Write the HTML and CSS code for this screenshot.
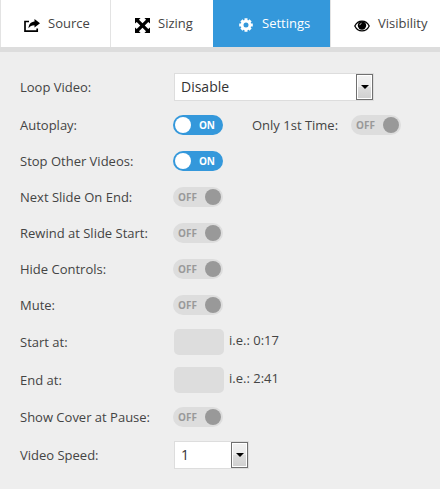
FILE: index.html
```html
<!DOCTYPE html>
<html lang="en">
<head>
<meta charset="utf-8">
<title>Video Settings</title>
<link rel="stylesheet" href="styles.css">
</head>
<body>
<nav class="tabs">
  <a class="tab source"><svg class="icon" viewBox="0 0 16 14"><path d="M5 2.500H1v9.700h12.200V9.500" fill="none" stroke="currentColor" stroke-width="1.700"/><path d="M10.500 0L16 4.300l-5.500 4.200V6.200C7.700 6.200 6 7 4.500 9.300 4.700 5.500 6.800 2.800 10.500 2.500z"/></svg><span>Source</span></a>
  <a class="tab sizing"><svg class="icon" viewBox="0 0 14 14"><path d="M0 0h5.200L3.700 1.600 7 4.900l3.300-3.300L8.800 0H14v5.200l-1.600-1.500L9.100 7l3.300 3.300L14 8.800V14H8.800l1.500-1.600L7 9.100l-3.300 3.300L5.200 14H0V8.800l1.600 1.500L4.900 7 1.600 3.700 0 5.200z"/></svg><span>Sizing</span></a>
  <a class="tab settings"><svg class="icon" viewBox="-7 -7 14 14"><circle r="3.900" fill="none" stroke="currentColor" stroke-width="2.800"/><path d="M-1.500-4.500v-2.300h3v2.300M-1.500 4.500v2.300h3V4.500M-4.500-1.500h-2.300v3h2.300M4.500-1.500h2.300v3H4.500"/><path transform="rotate(45)" d="M-1.500-4.500v-2h3v2M-1.500 4.500v2h3v-2M-4.500-1.500h-2v3h2M4.500-1.500h2v3h-2"/></svg><span>Settings</span></a>
  <a class="tab visibility"><svg class="icon" viewBox="0 0 16 12"><path d="M.8 6C4-.5 12-.5 15.200 6 12 12.500 4 12.500.8 6z" fill="#fff" stroke="currentColor" stroke-width="1.300"/><circle cx="8" cy="5.500" r="4.200"/><path d="M5.800 5.200Q6 3.500 7.600 3.200" stroke="#bbb" stroke-width="1" fill="none"/></svg><span>Visibility</span></a>
</nav>
<main class="panel">
  <div class="row tall"><span class="label">Loop Video:</span><div class="select wide"><span>Disable</span><i class="arrow"></i></div></div>
  <div class="row"><span class="label">Autoplay:</span><div class="toggle on"><b>ON</b></div><span class="second">Only 1st Time:</span><div class="toggle"><b>OFF</b></div></div>
  <div class="row"><span class="label">Stop Other Videos:</span><div class="toggle on"><b>ON</b></div></div>
  <div class="row"><span class="label">Next Slide On End:</span><div class="toggle"><b>OFF</b></div></div>
  <div class="row"><span class="label">Rewind at Slide Start:</span><div class="toggle"><b>OFF</b></div></div>
  <div class="row"><span class="label">Hide Controls:</span><div class="toggle"><b>OFF</b></div></div>
  <div class="row"><span class="label">Mute:</span><div class="toggle"><b>OFF</b></div></div>
  <div class="row field"><span class="label">Start at:</span><div class="input"></div><span class="hint">i.e.: 0:17</span></div>
  <div class="row field"><span class="label">End at:</span><div class="input"></div><span class="hint">i.e.: 2:41</span></div>
  <div class="row"><span class="label">Show Cover at Pause:</span><div class="toggle"><b>OFF</b></div></div>
  <div class="row tall"><span class="label">Video Speed:</span><div class="select"><span>1</span><i class="arrow"></i></div></div>
</main>
</body>
</html>
```
FILE: styles.css
```css
* { box-sizing: border-box; }
body {
  margin: 0;
  height: 489px;
  overflow: hidden;
  background: #eee;
  color: #444;
  font: 13px/18px "Open Sans", sans-serif;
}
.tabs {
  display: flex;
  height: 52px;
  border-bottom: 5px solid #ddd;
  background: #fff;
}
.tab {
  display: flex;
  flex: none;
  height: 47px;
  padding-top: 14px;
  border-left: 1px solid #e3e3e3;
}
.icon { fill: currentColor; color: #000; flex: none; }
.source { width: 110px; padding-left: 23px; }
.source .icon { width: 16px; height: 14px; margin: 5px 8px 0 0; }
.sizing { width: 103px; padding-left: 24px; }
.sizing .icon { width: 15px; height: 15px; margin: 4px 8px 0 0; }
.settings { width: 117px; padding-left: 26px; border-left: 0; background: #3498db; color: #fff; }
.settings .icon { width: 14px; height: 14px; margin: 4px 9px 0 0; color: #fff; }
.visibility { width: 110px; padding-left: 23px; }
.visibility .icon { width: 16px; height: 12px; margin: 6px 8px 0 0; }
.panel { padding: 15px 0 0 20px; }
.row { display: flex; align-items: center; height: 36px; white-space: nowrap; }
.row.tall { height: 40px; }
.row.field { height: 38px; }
.label { width: 153px; flex: none; }
.toggle {
  display: flex;
  align-items: center;
  justify-content: space-between;
  width: 50px;
  height: 20px;
  padding: 0 2px 0 5px;
  border-radius: 10px;
  background: #ddd;
  color: #999;
  font-size: 10px;
}
.toggle b { font-weight: 700; line-height: 20px; }
.toggle::after {
  content: "";
  width: 16px;
  height: 16px;
  border-radius: 50%;
  background: #999;
}
.toggle.on {
  flex-direction: row-reverse;
  padding: 0 8px 0 2px;
  background: #3498db;
  color: #fff;
}
.toggle.on::after { background: #fff; }
.second { width: 99px; margin-left: 29px; }
.select {
  display: flex;
  align-items: center;
  justify-content: space-between;
  width: 75px;
  height: 28px;
  margin-left: 1px;
  padding-left: 6px;
  border: 1px solid #ddd;
  background: #fff;
  color: #333;
  font-size: 14px;
}
.select.wide { width: 200px; }
.arrow {
  display: flex;
  align-items: center;
  justify-content: center;
  width: 17px;
  height: 26px;
  border: 1px solid #707070;
  background: linear-gradient(#f2f2f2, #ebebeb 50%, #ddd 50%, #cfcfcf);
  box-shadow: inset 0 0 0 1px #fff;
}
.arrow::before {
  content: "";
  border: 4px solid transparent;
  border-top-color: #000;
  border-bottom: 0;
}
.input {
  width: 50px;
  height: 26px;
  margin-left: 1px;
  border-radius: 5px;
  background: #ddd;
}
.hint { margin: -4px 0 0 5px; }
```
